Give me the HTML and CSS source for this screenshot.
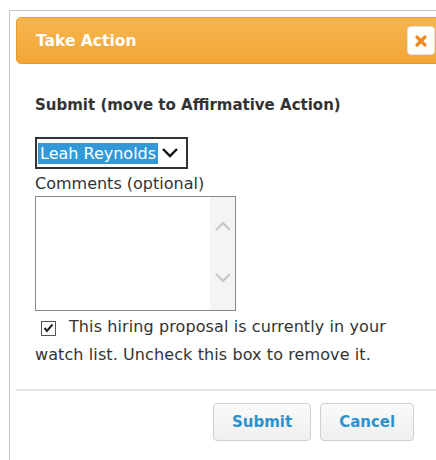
FILE: index.html
```html
<!DOCTYPE html>
<html>
<head>
<meta charset="utf-8">
<link rel="stylesheet" href="styles.css">
</head>
<body>
<div class="dialog">
  <div class="titlebar">
    <span class="title">Take Action</span>
    <button class="close" aria-label="Close">
      <svg width="14" height="14" viewBox="0 0 14 14"><path d="M3 3 L11 11 M11 3 L3 11" stroke="#ef8a1c" stroke-width="3.2" stroke-linecap="round"/></svg>
    </button>
  </div>
  <div class="content">
    <h2 class="heading">Submit (move to Affirmative Action)</h2>
    <div class="select">
      <span class="selected">Leah Reynolds</span>
      <svg class="chev" width="18" height="12" viewBox="0 0 18 12"><path d="M2 2 L9 9 L16 2" fill="none" stroke="#111" stroke-width="2.4"/></svg>
    </div>
    <div class="label">Comments (optional)</div>
    <div class="textarea">
      <div class="scroll">
        <svg width="18" height="11" viewBox="0 0 18 11"><path d="M2 9 L9 2 L16 9" fill="none" stroke="#c8c8c8" stroke-width="2.2"/></svg>
        <svg width="18" height="11" viewBox="0 0 18 11"><path d="M2 2 L9 9 L16 2" fill="none" stroke="#c8c8c8" stroke-width="2.2"/></svg>
      </div>
    </div>
    <p class="watch"><span class="check"><svg width="11" height="10" viewBox="0 0 11 10"><path d="M1.5 5 L4 8 L9.5 1.5" fill="none" stroke="#222" stroke-width="2"/></svg></span>This hiring proposal is currently in your watch list. Uncheck this box to remove it.</p>
  </div>
  <div class="footer">
    <button class="btn">Submit</button>
    <button class="btn">Cancel</button>
  </div>
</div>
</body>
</html>
```
FILE: styles.css
```css
html, body {
  margin: 0;
  background: #fff;
  overflow: hidden;
  height: 460px;
}
body {
  font-family: "DejaVu Sans", Verdana, sans-serif;
  color: #333;
}
.dialog {
  margin: 10px 0 0 9px;
  width: 440px;
  height: 470px;
  border-left: 1px solid #c4c4c4;
  border-top: 1px solid #c4c4c4;
  padding: 6px 0 0 6px;
  box-sizing: border-box;
}
.titlebar {
  height: 47px;
  box-sizing: border-box;
  border: 1px solid #e89a2c;
  border-radius: 5px;
  background: linear-gradient(#f6b650, #f2a534);
  display: flex;
  align-items: center;
  justify-content: space-between;
  padding: 0 0 0 19px;
  width: 430px;
}
.title {
  color: #fff;
  font-weight: bold;
  font-size: 15.5px;
}
.close {
  width: 28px;
  height: 29px;
  border: 1px solid #e0e0e0;
  border-radius: 4px;
  background: #fff;
  display: flex;
  align-items: center;
  justify-content: center;
  padding: 0;
  margin-right: 10px;
}
.content {
  padding: 32px 0 0 19px;
}
.heading {
  margin: 0;
  font-size: 15px;
  font-weight: bold;
  color: #333;
  line-height: 18px;
}
.select {
  margin-top: 23px;
  width: 153px;
  height: 32px;
  box-sizing: border-box;
  border: 2px solid #333;
  display: flex;
  align-items: center;
  padding-left: 1px;
}
.selected {
  background: #3298d8;
  color: #fff;
  font-size: 16px;
  line-height: 21px;
  padding: 0 2px;
}
.chev {
  margin-left: 3px;
}
.label {
  font-size: 16px;
  line-height: 24px;
  margin-top: 3px;
}
.textarea {
  width: 201px;
  height: 115px;
  box-sizing: border-box;
  border: 1px solid #888;
  display: flex;
  justify-content: flex-end;
}
.scroll {
  width: 25px;
  background: #f4f4f4;
  display: flex;
  flex-direction: column;
  justify-content: space-between;
  align-items: center;
  padding: 24px 0 27px;
}
.watch {
  margin: 2px 0 0;
  font-size: 16px;
  letter-spacing: 0.1px;
  line-height: 28px;
  width: 365px;
}
.check {
  display: inline-flex;
  width: 13px;
  height: 13px;
  border: 1px solid #555;
  align-items: center;
  justify-content: center;
  margin: 0 13px 0 6px;
  vertical-align: -1px;
}
.footer {
  margin-top: 20px;
  border-top: 2px solid #e6e6e6;
  width: 430px;
  display: flex;
  gap: 9px;
  padding: 12px 0 0 197px;
  box-sizing: border-box;
}
.btn {
  font-family: "DejaVu Sans", Verdana, sans-serif;
  font-weight: bold;
  font-size: 15px;
  color: #2d92cc;
  background: linear-gradient(#fafafa, #efefef);
  border: 1px solid #cfcfcf;
  border-radius: 4px;
  height: 38px;
  padding: 0 18px;
}
```
